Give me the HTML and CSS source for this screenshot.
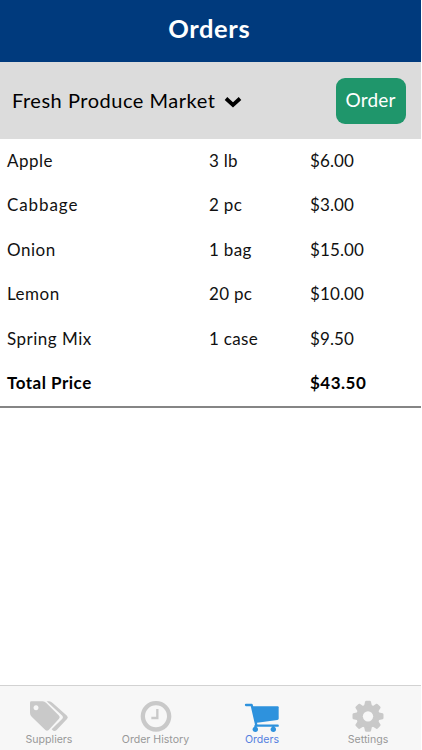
FILE: index.html
```html
<!DOCTYPE html>
<html lang="en">
<head>
    <meta charset="UTF-8">
    <meta name="viewport" content="width=device-width, initial-scale=1.0">
    <title>Orders</title>
    <link rel="stylesheet" href="styles.css">
</head>
<body>
    <div class="app">
        <header class="header">
            <h1>Orders</h1>
        </header>

        <div class="toolbar">
            <div class="supplier">
                <span class="supplier-name">Fresh Produce Market</span>
                <svg class="chevron" width="18" height="13" viewBox="0 0 18 13">
                    <path d="M2 2.500 L9 9 L16 2.500" fill="none" stroke="#000" stroke-width="3.800"/>
                </svg>
            </div>
            <button class="order-button">Order</button>
        </div>

        <main class="orders">
            <div class="row"><span class="name">Apple</span><span>3 lb</span><span class="price">$6.00</span></div>
            <div class="row"><span class="name wide">Cabbage</span><span>2 pc</span><span class="price">$3.00</span></div>
            <div class="row"><span class="name">Onion</span><span>1 bag</span><span class="price">$15.00</span></div>
            <div class="row"><span class="name">Lemon</span><span>20 pc</span><span class="price">$10.00</span></div>
            <div class="row"><span class="name">Spring Mix</span><span>1 case</span><span class="price">$9.50</span></div>
            <div class="row total"><span>Total Price</span><span></span><span>$43.50</span></div>
        </main>

        <nav class="tabs">
            <div class="tab">
                <svg class="icon" width="40" height="32" viewBox="0 0 120 96">
                    <path fill-rule="evenodd" d="M7 4 H41 Q47 4 52 9 L89 46 Q95 51 90 56 L59 90 Q54 95 49 90 L8 50 Q3 45 3 39 V8 Q3 4 7 4 Z M21 16 a7.500 7.500 0 1 0 .1 0 Z"/>
                    <path d="M53 4 H60 Q66 4 71 9 L114 47 Q119 52 114 57 L83 90 Q78 95 73 92 L68 88 L100 56 Q104 51 100 47 Z"/>
                </svg>
                <span>Suppliers</span>
            </div>
            <div class="tab">
                <svg class="icon" width="32" height="32" viewBox="0 0 96 96">
                    <circle cx="48" cy="49" r="39.500" fill="none" stroke="#c9c9c9" stroke-width="13"/>
                    <path d="M52 27 V54 H34" fill="none" stroke="#c9c9c9" stroke-width="7"/>
                </svg>
                <span>Order History</span>
            </div>
            <div class="tab active">
                <svg class="icon" width="36" height="32" viewBox="0 0 108 96">
                    <path d="M6 15 H23 L37 76" fill="none" stroke="#2e92dd" stroke-width="7" stroke-linecap="round" stroke-linejoin="round"/>
                    <path d="M25 19 H101 Q104 19 104 22 V56 Q104 59 100 60 L34 69 Z"/>
                    <path d="M35 77 H101" fill="none" stroke="#2e92dd" stroke-width="7" stroke-linecap="round"/>
                    <path d="M34 77 V88 M88 77 V88" fill="none" stroke="#2e92dd" stroke-width="6"/>
                    <circle cx="34" cy="88" r="8"/>
                    <circle cx="88" cy="88" r="8"/>
                </svg>
                <span>Orders</span>
            </div>
            <div class="tab">
                <svg class="icon" width="32" height="32" viewBox="-48 -49 96 96">
                    <defs>
                        <path id="tooth" d="M-12 -30 L-9 -44 Q-8 -46.500 -5 -46.500 H5 Q8 -46.500 9 -44 L12 -30 V30 L9 44 Q8 46.500 5 46.500 H-5 Q-8 46.500 -9 44 L-12 30 Z"/>
                    </defs>
                    <use href="#tooth"/>
                    <use href="#tooth" transform="rotate(45)"/>
                    <use href="#tooth" transform="rotate(90)"/>
                    <use href="#tooth" transform="rotate(135)"/>
                    <circle r="35"/>
                    <circle class="gear-hole" r="15.500"/>
                </svg>
                <span>Settings</span>
            </div>
        </nav>
    </div>
</body>
</html>
```

FILE: styles.css
```css
* {
    box-sizing: border-box;
    margin: 0;
    padding: 0;
}

body {
    font-family: Lato, sans-serif;
    background-color: white;
    color: #111;
}

.app {
    display: flex;
    flex-direction: column;
    width: 420.5px;
    height: 750px;
}

.header {
    height: 62px;
    padding-top: 11px;
    background-color: #003a7d;
    color: white;
    text-align: center;
}

h1 {
    font-size: 25.5px;
    line-height: 34px;
    font-weight: 700;
    letter-spacing: 0.6px;
    margin-right: 2px;
}

.toolbar {
    display: flex;
    justify-content: space-between;
    align-items: center;
    height: 77px;
    padding: 0 15px 0 12px;
    background-color: #dcdcdc;
}

.supplier {
    display: flex;
    align-items: center;
    gap: 9px;
    color: #000;
}

.supplier-name {
    font-size: 20px;
    line-height: 28px;
    letter-spacing: 0.52px;
    padding-bottom: 2px;
}

.chevron {
    margin-top: 3px;
}

.order-button {
    width: 70px;
    height: 46px;
    padding-bottom: 2px;
    background-color: #1f966b;
    color: white;
    border: none;
    border-radius: 9px;
    font-family: inherit;
    font-size: 19px;
    letter-spacing: 0.2px;
}

.orders {
    height: 268.5px;
    border-bottom: 2px solid #858585;
}

.row {
    display: grid;
    grid-template-columns: 202px 101px 1fr;
    align-items: center;
    height: 44.5px;
    padding: 0 0 2px 7px;
    font-size: 17px;
    letter-spacing: 0.3px;
}

.name {
    letter-spacing: 0.5px;
}

.wide {
    letter-spacing: 0.9px;
}

.price {
    letter-spacing: 0.1px;
}

.total {
    font-weight: 700;
    letter-spacing: 0.5px;
    color: #000;
}

.tabs {
    display: grid;
    grid-template-columns: 98px 115px 98px 114px;
    height: 65px;
    margin-top: auto;
    background-color: #f7f7f7;
    border-top: 1px solid #d2d2d2;
}

.tab {
    display: flex;
    flex-direction: column;
    align-items: center;
    padding-top: 14px;
    color: #999;
    font-family: Inter, sans-serif;
    font-size: 10.6px;
    line-height: 14px;
}

.icon {
    display: block;
    margin-bottom: 1px;
    fill: #c9c9c9;
}

.active {
    color: #5580df;
}

.active .icon {
    fill: #2e92dd;
}

.gear-hole {
    fill: #f7f7f7;
}
```
